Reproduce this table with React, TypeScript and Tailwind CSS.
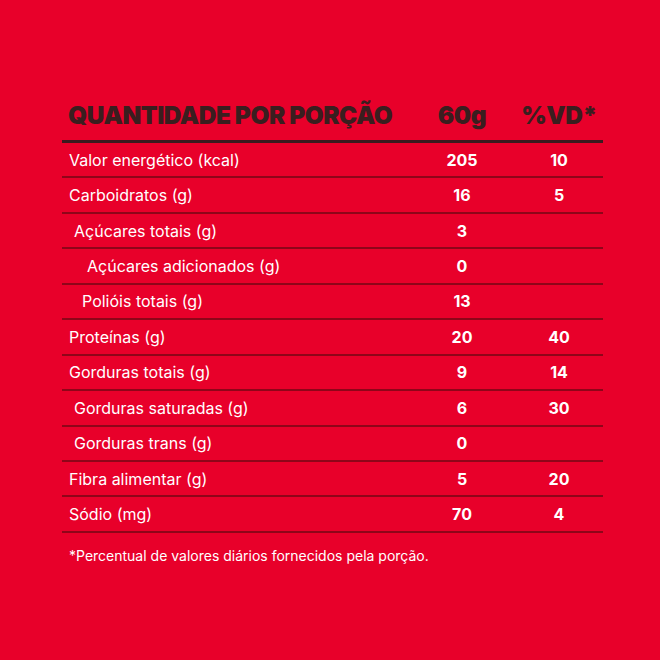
const rows: { label: string; indent: string; qty: string; vd: string }[] = [
  { label: "Valor energético (kcal)", indent: "pl-[7px]", qty: "205", vd: "10" },
  { label: "Carboidratos (g)", indent: "pl-[7px]", qty: "16", vd: "5" },
  { label: "Açúcares totais (g)", indent: "pl-[12px]", qty: "3", vd: "" },
  { label: "Açúcares adicionados (g)", indent: "pl-[25px]", qty: "0", vd: "" },
  { label: "Polióis totais (g)", indent: "pl-[20px]", qty: "13", vd: "" },
  { label: "Proteínas (g)", indent: "pl-[7px]", qty: "20", vd: "40" },
  { label: "Gorduras totais (g)", indent: "pl-[7px]", qty: "9", vd: "14" },
  { label: "Gorduras saturadas (g)", indent: "pl-[12px]", qty: "6", vd: "30" },
  { label: "Gorduras trans (g)", indent: "pl-[12px]", qty: "0", vd: "" },
  { label: "Fibra alimentar (g)", indent: "pl-[7px]", qty: "5", vd: "20" },
  { label: "Sódio (mg)", indent: "pl-[7px]", qty: "70", vd: "4" },
];

export default function App() {
  return (
    <div className="w-[660px] h-[660px] bg-[#e8002a] pl-[62px] pr-[57px] pt-[87px] font-['Inter',sans-serif] text-white">
      {/* Header */}
      <div className="grid grid-cols-[1fr_80px_80px] gap-x-[17px] pr-[4px] h-[56px] pt-[3px] items-center border-b-[3px] border-[#3b1a1f] text-[#3a1e1f] font-black text-[24.5px] tracking-[-0.5px]">
        <div className="pl-[6px]">QUANTIDADE POR PORÇÃO</div>
        <div className="text-center">60g</div>
        <div className="text-center">%VD*</div>
      </div>

      {/* Rows */}
      {rows.map((r) => (
        <div
          key={r.label}
          className="grid grid-cols-[1fr_80px_80px] gap-x-[17px] pr-[4px] h-[35.45px] items-center border-b-2 border-[#8f0519]"
        >
          <div className={`${r.indent} text-[16px]`}>{r.label}</div>
          <div className="text-center font-bold text-[16px]">{r.qty}</div>
          <div className="text-center font-bold text-[16px]">{r.vd}</div>
        </div>
      ))}

      <p className="pl-[7px] pt-[12px] text-[14px]">
        *Percentual de valores diários fornecidos pela porção.
      </p>
    </div>
  );
}
